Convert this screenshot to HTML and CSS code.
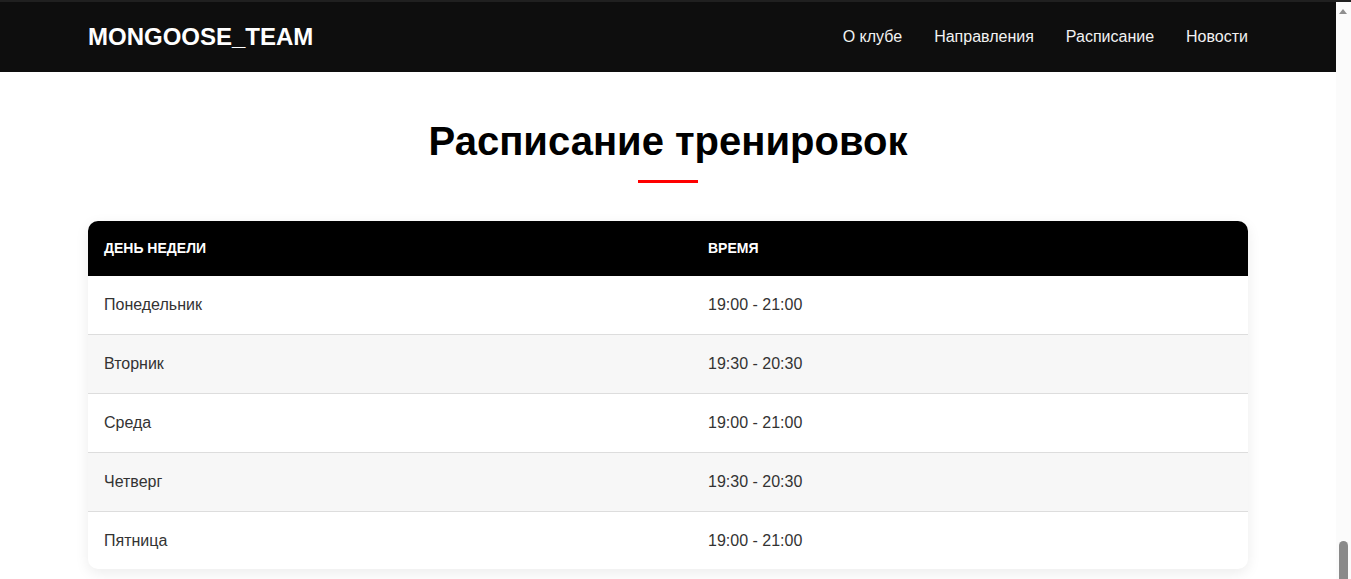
FILE: index.html
```html
<!DOCTYPE html>
<html lang="ru">
<head>
<meta charset="utf-8">
<title>MONGOOSE_TEAM — Расписание</title>
<link rel="stylesheet" href="styles.css">
</head>
<body>
<header class="site-header">
  <div class="container header-inner">
    <div class="logo">MONGOOSE_TEAM</div>
    <nav class="nav">
      <a href="#" class="nav-link">О клубе</a>
      <a href="#" class="nav-link">Направления</a>
      <a href="#" class="nav-link">Расписание</a>
      <a href="#" class="nav-link">Новости</a>
    </nav>
  </div>
</header>
<main>
  <section class="schedule">
    <div class="container">
      <h2 class="section-title">Расписание тренировок</h2>
      <div class="title-line"></div>
      <div class="table-wrap">
        <table class="schedule-table">
          <thead>
            <tr><th class="col-day">День недели</th><th>Время</th></tr>
          </thead>
          <tbody>
            <tr><td>Понедельник</td><td>19:00 - 21:00</td></tr>
            <tr><td>Вторник</td><td>19:30 - 20:30</td></tr>
            <tr><td>Среда</td><td>19:00 - 21:00</td></tr>
            <tr><td>Четверг</td><td>19:30 - 20:30</td></tr>
            <tr><td>Пятница</td><td>19:00 - 21:00</td></tr>
          </tbody>
        </table>
      </div>
    </div>
  </section>
</main>
<div class="scrollbar" aria-hidden="true">
  <span class="scroll-arrow"></span>
  <span class="scroll-thumb"></span>
</div>
</body>
</html>
```
FILE: styles.css
```css
* {
  box-sizing: border-box;
}
body {
  margin: 0;
  padding-right: 15px;
  font-family: "Liberation Sans", Arial, sans-serif;
  color: #333;
  background: #fff;
  line-height: 1.6;
}
.container {
  max-width: 1160px;
  margin: 0 auto;
}
.site-header {
  background: #0e0e0e;
  border-top: 2px solid #202020;
  height: 72px;
}
.header-inner {
  height: 70px;
  display: flex;
  align-items: center;
  justify-content: space-between;
}
.logo {
  color: #fff;
  font-weight: 700;
  font-size: 24px;
  line-height: 1;
}
.nav {
  display: flex;
  gap: 32px;
}
.nav-link {
  color: #f2f2f2;
  text-decoration: none;
  font-size: 16px;
}
.schedule {
  padding-top: 45px;
  padding-bottom: 10px;
}
.section-title {
  margin: 0;
  text-align: center;
  font-size: 40px;
  line-height: 1.2;
  font-weight: 700;
  color: #000;
}
.title-line {
  width: 60px;
  height: 3px;
  background: #ff0000;
  margin: 15px auto 38px;
}
.table-wrap {
  border-radius: 10px;
  overflow: hidden;
  box-shadow: 0 4px 14px rgba(0, 0, 0, 0.08);
}
.schedule-table {
  width: 100%;
  border-collapse: collapse;
}
.schedule-table th {
  background: #000;
  color: #fff;
  text-align: left;
  text-transform: uppercase;
  font-size: 14px;
  font-weight: 700;
  padding: 16px 16px 17px;
}
.col-day {
  width: 604px;
}
.schedule-table td {
  padding: 16.1px 16px;
  font-size: 16px;
  color: #333;
  border-bottom: 1px solid #ddd;
}
.schedule-table tbody tr:nth-child(even) td {
  background: #f7f7f7;
}
.schedule-table tbody tr:last-child td {
  border-bottom: none;
}

/* decorative browser scrollbar seen in the reference */
.scrollbar {
  position: fixed;
  top: 0;
  right: 0;
  bottom: 0;
  width: 15px;
  background: #fbfbfb;
  border-top: 2px solid #202020;
}
.scroll-arrow {
  position: absolute;
  top: 7px;
  left: 3px;
  width: 0;
  height: 0;
  border-left: 4.5px solid transparent;
  border-right: 4.5px solid transparent;
  border-bottom: 5px solid #8f8f8f;
}
.scroll-thumb {
  position: absolute;
  left: 3px;
  bottom: 0;
  width: 9px;
  height: 38px;
  background: #8a8a8a;
  border-radius: 5px 5px 0 0;
}
```
